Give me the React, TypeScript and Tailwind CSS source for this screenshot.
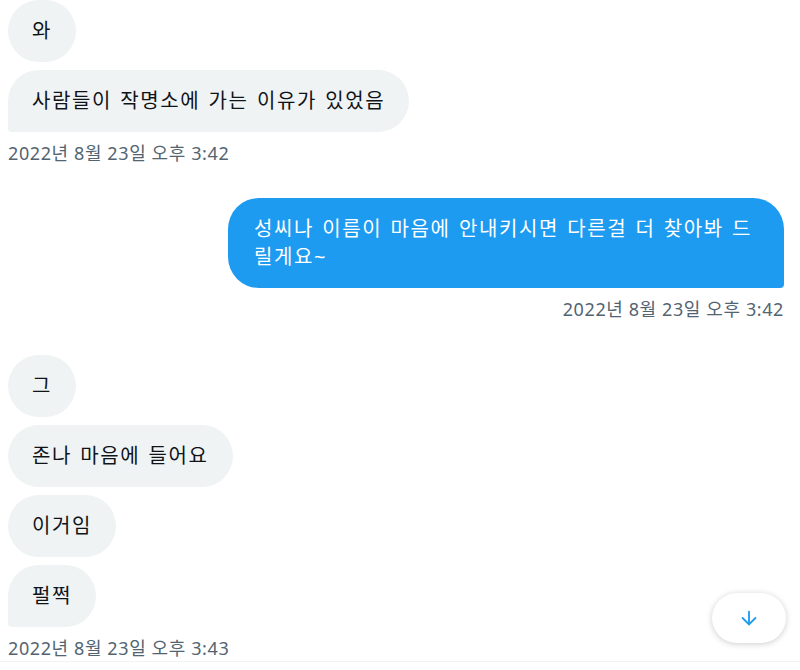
import { ArrowDown } from "lucide-react";

type Msg = { text: string; last?: boolean };

const FONT = { fontFamily: '"Noto Sans", "Noto Sans CJK KR", sans-serif' };

function Received({ text, last }: Msg) {
  return (
    <div
      className={
        "w-fit bg-[#eff3f4] px-6 py-[17px] text-[20px] leading-[28px] tracking-[1.6px] text-[#0f1419] [word-spacing:1.5px] " +
        (last ? "rounded-[31px] rounded-bl-[4px]" : "rounded-[31px]")
      }
    >
      {text}
    </div>
  );
}

function Stamp({ text, right }: { text: string; right?: boolean }) {
  return (
    <div className={"mt-2 text-[18px] leading-[26px] tracking-[0.6px] text-[#536471] " + (right ? "text-right" : "")}>
      {text}
    </div>
  );
}

export default function App() {
  return (
    <div className="relative flex h-[670px] w-[800px] flex-col overflow-hidden bg-white" style={FONT}>
      <div className="h-[661px] pl-2 pr-4">
        <div className="flex flex-col gap-2">
          <Received text="와" />
          <Received text="사람들이 작명소에 가는 이유가 있었음" last />
        </div>
        <Stamp text="2022년 8월 23일 오후 3:42" />

        <div className="mt-8 flex justify-end">
          <div className="w-[556px] break-all rounded-[31px] rounded-br-[4px] bg-[#1d9bf0] py-[17px] pl-[26px] pr-6 text-[20px] leading-[28px] tracking-[1.6px] text-white [word-spacing:1.5px]">
            성씨나 이름이 마음에 안내키시면 다른걸 더 찾아봐 드릴게요~
          </div>
        </div>
        <Stamp text="2022년 8월 23일 오후 3:42" right />

        <div className="mt-[33px] flex flex-col gap-2">
          <Received text="그" />
          <Received text="존나 마음에 들어요" />
          <Received text="이거임" />
          <Received text="펄쩍" last />
        </div>
        <Stamp text="2022년 8월 23일 오후 3:43" />
      </div>
      <div className="flex-1 border-t border-[#eff3f4]" />

      <button className="absolute left-[712px] top-[593px] flex h-[50px] w-[74px] items-center justify-center rounded-full bg-white shadow-[0_1px_6px_rgba(0,0,0,0.2)]">
        <ArrowDown size={22} strokeWidth={2} color="#1d9bf0" />
      </button>
    </div>
  );
}
